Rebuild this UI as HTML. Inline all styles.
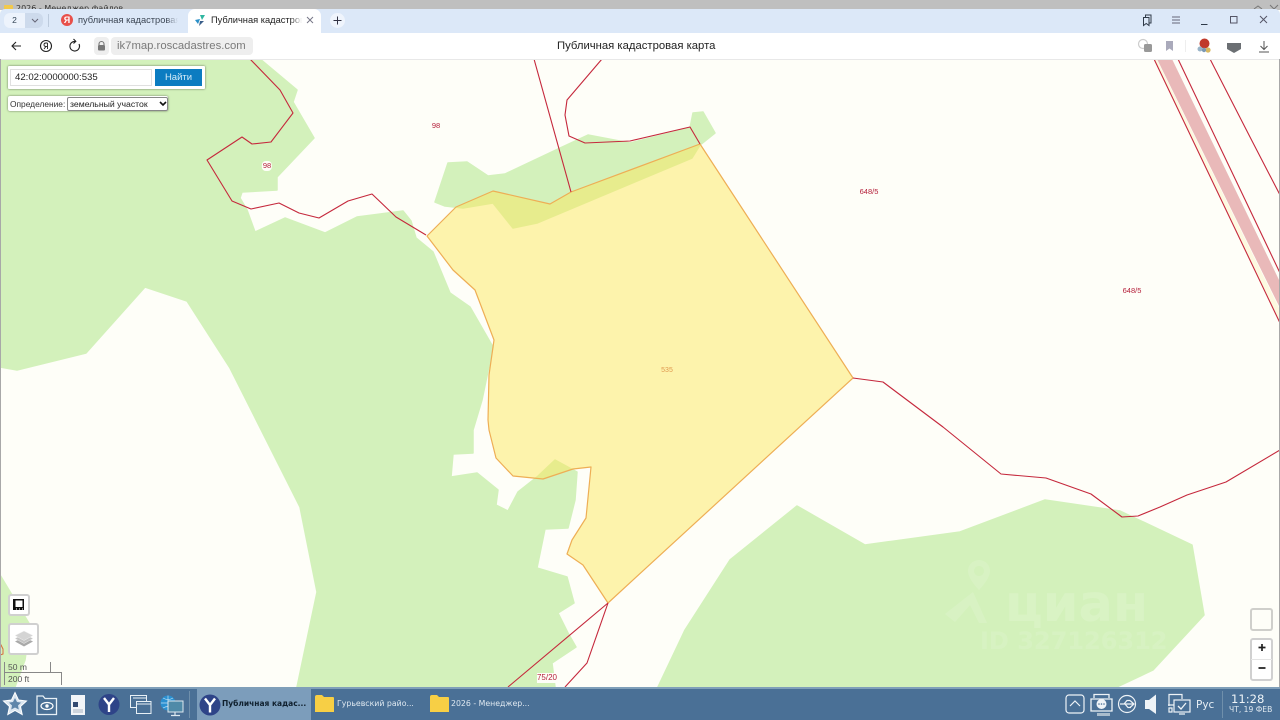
<!DOCTYPE html>
<html lang="ru"><head><meta charset="utf-8"><title>Публичная кадастровая карта</title>
<style>
html,body{margin:0;padding:0;width:1280px;height:720px;overflow:hidden;background:#fefef8;font-family:"Liberation Sans","Noto Sans CJK SC",sans-serif}
#w{position:absolute;left:0;top:0;width:1280px;height:720px;overflow:hidden;filter:blur(.3px)}
.a{position:absolute;white-space:nowrap}
svg{position:absolute;overflow:visible}
.lbl{position:absolute;font-size:7.5px;line-height:10px;color:#b5213c;transform:translateX(-50%)}
.dj{font-family:"DejaVu Sans",sans-serif}
.ctl{position:absolute;background:#fff;border:2px solid rgba(120,120,120,.35);border-radius:3px;box-sizing:border-box}
</style></head><body><div id="w">

<svg style="left:0;top:0" width="1280" height="720" viewBox="0 0 1280 720">
<rect width="1280" height="720" fill="#fefef8"/>
<g fill="#d3f1bb" stroke="#d3f1bb" stroke-width="1.5" stroke-linejoin="round">
<polygon points="0,59 260,59 297,90 293,102 314,138 277,177 277,190 242,192 240,198 247,210 255,232 285,218 325,233 357,217 403,211 411,221 416,238 433,252 450,293 470,307 493,347 482,400 473,430 473,453 453,454 451,477 477,473 498,490 496,505 508,511 518,492 537,477 555,460 577,472 575,500 568,528 545,529 537,568 567,577 574,603 558,613 568,633 576,647 552,663 555,687 297,687 317,592 300,507 230,368 187,301 145,287 86,353 17,370 0,367"/>
<polygon points="435,202 448,163 467,162 488,176 505,174 560,148 588,135 630,143 690,128 693,113 703,112 715,133 700,145 692,158 537,223 513,228 493,203 463,208 445,206"/>
<polygon points="658,687 685,630 730,560 797,506 865,545 960,532 1045,500 1120,511 1192,545 1204,615 1153,670 1117,687"/>
<polygon points="0,575 30,625 25,660 15,687 0,687"/>
</g>
<polygon points="1157,59 1172,59 1280,282 1280,308" fill="#e9b9b9"/>
<polygon points="1154,60 1157,60 1280,310 1280,322" fill="#fbf3c8" opacity=".5"/>
<polygon points="427,236 456,207 493,191 550,204 571,192 700,144 853,378 608,603 583,565 567,554 572,540 586,518 591,467 573,469 543,479 513,476 496,458 489,430 488,420 489,375 494,340 475,290 453,270" fill="#fce85f" fill-opacity=".5" stroke="#eeae55" stroke-width="1.2" stroke-linejoin="round"/>
<g fill="none" stroke="#c5283c" stroke-width="1.1" stroke-linejoin="round">
<polyline points="250,59 280,90 293,113 271,142 252,144 242,137 207,160 232,201 251,209 279,203 299,213 319,218 348,201 372,194 396,217 426,235"/>
<polyline points="534,59 571,192"/>
<polyline points="602,59 567,100 565,115 569,136 585,143 630,141 690,127 700,144"/>
<polyline points="853,378 883,382 943,427 1001,474 1046,478 1091,494 1122,517 1138,516 1160,507 1187,495 1226,482 1280,450"/>
<polyline points="608,603 508,687"/>
<polyline points="608,603 587,663 565,687"/>
<polyline points="1154,59 1280,323"/>
<polyline points="1178,59 1280,273"/>
<polyline points="1210,59 1250,137 1280,195"/>
</g>
<path d="M0,643 l3,6 l0,5 l-3,1" fill="none" stroke="#d8693c" stroke-width="1"/>
<g fill="#fff" fill-opacity=".13">
<path d="M979,560 a11,11 0 0 1 11,11 c0,8 -11,19 -11,19 c0,0 -11,-11 -11,-19 a11,11 0 0 1 11,-11 Z M979,566 a5,5 0 1 0 .01,0 Z" fill-rule="evenodd"/>
<path d="M945,614 L973,592 L987,623 L979,623 L970,605 L955,622 Z"/>
</g>
</svg>

<div class="a dj" style="left:1005px;top:575px;font-size:51px;line-height:60px;font-weight:bold;color:#fff;opacity:.14">циан</div>
<div class="a dj" style="left:980px;top:627px;font-size:24px;line-height:28px;font-weight:bold;color:#fff;opacity:.11">ID 327126312</div>

<div class="lbl" style="left:436px;top:121px">98</div>
<div class="lbl" style="left:267px;top:161px;background:#fefef8;border-radius:4px;padding:0 1px">98</div>
<div class="lbl" style="left:869px;top:187px">648/5</div>
<div class="lbl" style="left:1132px;top:286px">648/5</div>
<div class="lbl" style="left:667px;top:366px;color:#e09a50;font-size:7px">535</div>
<div class="lbl" style="left:547px;top:673px;background:#fefef8;font-size:8px">75/20</div>

<!-- Window chrome -->
<div class="a" style="left:0;top:0;width:1280px;height:10px;background:#bfbfbf;overflow:hidden">
 <div class="a dj" style="left:16px;top:4px;font-size:8px;line-height:10px;color:#333">2026 - Менеджер файлов</div>
 <div class="a" style="left:4px;top:5px;width:9px;height:7px;background:#f2c94c;border-radius:1px"></div>
 <svg style="left:1254px;top:4px" width="26" height="6"><path d="M0,5 L4,2 L8,5 M16,1 L20,5 L24,1" fill="none" stroke="#777" stroke-width="1"/></svg>
</div>
<div class="a" style="left:0;top:9px;width:1280px;height:24px;background:#dce8f8;border-radius:5px 5px 0 0"></div>
<div class="a" style="left:4px;top:13px;width:21px;height:15px;background:#edf3fc;border-radius:6px 0 0 6px"></div>
<div class="a" style="left:25px;top:13px;width:18px;height:15px;background:#cddaec;border-radius:0 6px 6px 0"></div>
<div class="a" style="left:4px;top:13px;width:21px;height:15px;line-height:15px;text-align:center;font-size:8.5px;color:#345">2</div>
<svg style="left:31px;top:18px" width="8" height="5"><path d="M1,1 L4,4 L7,1" fill="none" stroke="#667" stroke-width="1"/></svg>
<div class="a" style="left:48px;top:14px;width:1px;height:13px;background:#bccadc"></div>
<div class="a" style="left:61px;top:14px;width:12px;height:12px;border-radius:50%;background:#e8504a;color:#fff;font-size:9px;line-height:12px;text-align:center;font-weight:bold">Я</div>
<div class="a" style="left:78px;top:14px;width:100px;height:13px;font-size:9.3px;line-height:13px;color:#3c4654;overflow:hidden;-webkit-mask-image:linear-gradient(90deg,#000 88%,transparent)">публичная кадастровая</div>
<div class="a" style="left:188px;top:9px;width:133px;height:24px;background:#fff;border-radius:7px 7px 0 0"></div>
<svg style="left:195px;top:15px" width="11" height="11" viewBox="0 0 11 11"><path d="M5,0 L10,0 L7,5 Z" fill="#2fb6a0"/><path d="M0,5 L5,4 L3,9 Z" fill="#2a8fc8"/><path d="M5,6 L9,6 L4,11 Z" fill="#3a5f8a"/></svg>
<div class="a" style="left:211px;top:14px;width:91px;height:13px;font-size:9.3px;line-height:13px;color:#222;overflow:hidden;-webkit-mask-image:linear-gradient(90deg,#000 88%,transparent)">Публичная кадастровая карта</div>
<svg style="left:306px;top:16px" width="8" height="8"><path d="M1,1 L7,7 M7,1 L1,7" stroke="#778" stroke-width="1"/></svg>
<div class="a" style="left:330px;top:13px;width:15px;height:15px;border-radius:50%;background:#eff4fc"></div>
<svg style="left:333px;top:16px" width="9" height="9"><path d="M4.5,0.5 V8.5 M0.5,4.5 H8.5" stroke="#334" stroke-width="1"/></svg>

<svg style="left:1140px;top:14px" width="130" height="13" viewBox="0 0 130 13" fill="none" stroke="#2f3a48" stroke-width="1">
<path d="M3.5,3.5 H9 V11.5 L6.2,9.5 L3.5,11.5 Z M5.5,3 V1 H11 V9 H9.5"/>
<path d="M32,3 H40 M32,6 H40 M32,9 H40" stroke="#667"/>
<path d="M61,10.5 H67.5"/>
<rect x="90.5" y="2.5" width="6.5" height="6.5" stroke="#556"/>
<path d="M120,2 L127,9 M127,2 L120,9" stroke="#556"/>
</svg>

<div class="a" style="left:0;top:33px;width:1280px;height:26px;background:#fff;border-bottom:1px solid #e8e8e8;box-sizing:content-box"></div>
<svg style="left:10px;top:38px" width="72" height="16" viewBox="0 0 72 16" fill="none" stroke="#222" stroke-width="1.1">
<path d="M11,8 H2 M6,4 L2,8 L6,12"/>
<circle cx="36" cy="8" r="5.5"/>
<path d="M37.5,5 H36 Q34,5 34,6.7 Q34,8.4 36,8.4 H37.5 M37.5,5 V11 M36,8.4 L34,11" stroke-width=".9"/>
<path d="M69,6 A4.8,4.8 0 1 1 65,3.4 M63.5,1 L65.8,3.4 L63.5,5.5"/>
</svg>
<div class="a" style="left:94px;top:37px;width:15px;height:18px;background:#eee;border-radius:4px"></div>
<svg style="left:97px;top:41px" width="9" height="10"><path d="M2,4 V3 A2.5,2.5 0 0 1 7,3 V4" fill="none" stroke="#777" stroke-width="1.1"/><rect x="1" y="4" width="7" height="5.5" rx="1" fill="#777"/></svg>
<div class="a" style="left:111px;top:37px;width:142px;height:18px;background:#eee;border-radius:4px"></div>
<div class="a" style="left:117px;top:37px;font-size:11.3px;line-height:18px;color:#7a7a7a">ik7map.roscadastres.com</div>
<div class="a" style="left:557px;top:39px;font-size:11.3px;line-height:14px;color:#222">Публичная кадастровая карта</div>

<svg style="left:1136px;top:37px" width="136" height="18" viewBox="0 0 136 18">
<circle cx="7" cy="7" r="4.5" fill="none" stroke="#ccc" stroke-width="1.2"/>
<rect x="8" y="7" width="8" height="8" rx="1.5" fill="#999"/>
<path d="M30,4 H37 V14 L33.5,11.5 L30,14 Z" fill="#aab"/>
<line x1="49.5" y1="3" x2="49.5" y2="15" stroke="#eee"/>
<circle cx="68.5" cy="6.5" r="5" fill="#c0392b"/>
<circle cx="64" cy="12" r="2.5" fill="#9ab4c8"/><circle cx="72" cy="13" r="2.6" fill="#d8b860"/><circle cx="68" cy="13" r="2.2" fill="#7d99b3"/>
<path d="M91,6 H105 V12 L98,16 L91,12 Z" fill="#6b6f73"/>
<path d="M128,4 V12 M124.5,9 L128,12.5 L131.5,9 M123,15 H133" fill="none" stroke="#555" stroke-width="1"/>
</svg>

<!-- left / right window edge -->
<div class="a" style="left:0;top:59px;width:1px;height:628px;background:#a8a8a8"></div>
<div class="a" style="left:1279px;top:59px;width:1px;height:628px;background:#a8a8a8"></div>

<!-- search -->
<div class="a" style="left:8px;top:66px;width:197px;height:23px;background:#fff;box-shadow:0 0 2px rgba(0,0,0,.55);border-radius:1px"></div>
<div class="a" style="left:10px;top:69px;width:142px;height:17px;border:1px solid #e0e0e0;box-sizing:border-box"></div>
<div class="a" style="left:15px;top:70px;font-size:9.6px;line-height:15px;color:#222">42:02:0000000:535</div>
<div class="a" style="left:155px;top:69px;width:47px;height:17px;background:#0b7cc1;color:#d6ecf8;font-size:9.5px;line-height:17px;text-align:center">Найти</div>
<div class="a" style="left:8px;top:96px;width:160px;height:15px;background:#fff;box-shadow:0 0 2px rgba(0,0,0,.5);border-radius:2px"></div>
<div class="a" style="left:10px;top:97px;font-size:8.4px;line-height:14px;color:#333">Определение:</div>
<div class="a" style="left:67px;top:97px;width:101px;height:14px;border:1px solid #888;border-radius:2px;box-sizing:border-box;background:#fff"></div>
<div class="a" style="left:70px;top:97px;font-size:8.7px;line-height:14px;color:#222">земельный участок</div>
<svg style="left:159px;top:101px" width="8" height="6"><path d="M1,1 L4,4 L7,1" fill="none" stroke="#111" stroke-width="1.6"/></svg>

<!-- map controls -->
<div class="ctl" style="left:8px;top:594px;width:22px;height:22px"></div>
<svg style="left:13px;top:599px" width="11" height="11"><path d="M0,0 H11 V11 H0 Z" fill="#111"/><rect x="2.5" y="1.5" width="7" height="6.5" fill="#fff"/><path d="M3,10 h1 M6,10 h1 M9,10 h1" stroke="#fff"/></svg>
<div class="ctl" style="left:8px;top:623px;width:31px;height:32px"></div>
<svg style="left:14px;top:630px" width="20" height="19" viewBox="0 0 20 19">
<path d="M1,11.5 L10,16.5 L19,11.5 L10,7 Z" fill="#aaa"/><path d="M1,8.5 L10,13.5 L19,8.5 L10,4 Z" fill="#c4c4c4" stroke="#eee" stroke-width=".5"/><path d="M1,5.5 L10,10.5 L19,5.5 L10,1 Z" fill="#d4d4d4" stroke="#f2f2f2" stroke-width=".5"/></svg>

<div class="a" style="left:4px;top:662px;width:47px;height:10px;border-left:1px solid #888;border-right:1px solid #888;box-sizing:border-box;font-size:8.5px;line-height:11px;color:#555;padding-left:3px">50 m</div>
<div class="a" style="left:4px;top:672px;width:58px;height:13px;border-top:1px solid #888;border-left:1px solid #888;border-right:1px solid #888;box-sizing:border-box;font-size:8.5px;line-height:13px;color:#555;padding-left:3px">200 ft</div>

<div class="ctl" style="left:1250px;top:608px;width:23px;height:23px;background:#fefef8"></div>
<div class="ctl" style="left:1250px;top:638px;width:23px;height:43px"></div>
<div class="a" style="left:1251px;top:659px;width:21px;height:1px;background:#e4e4e4"></div>
<svg style="left:1257px;top:643px" width="10" height="30"><path d="M5,1 V8 M1.5,4.5 H8.5 M1.5,25 H8.5" stroke="#222" stroke-width="1.7"/></svg>

<!-- taskbar -->
<div class="a" style="left:0;top:687px;width:1280px;height:33px;background:#4a7096"></div>
<div class="a" style="left:0;top:687px;width:1280px;height:2px;background:#7f9fb9"></div>
<div class="a" style="left:197px;top:689px;width:114px;height:31px;background:#7c9dbb"></div>
<div class="a" style="left:189px;top:691px;width:1px;height:27px;background:#6f8fab"></div>

<svg style="left:0;top:689px" width="190" height="31" viewBox="0 0 190 31">
<path d="M15,3.5 L18.5,11 L26.5,12 L20.5,17.5 L22.2,25.5 L15,21.5 L7.8,25.5 L9.5,17.5 L3.5,12 L11.5,11 Z" fill="#dbe6f0" stroke="#fff" stroke-width="1"/>
<path d="M15,9 L17,13 L21,13.6 L18,16.5 L18.8,20.5 L15,18.5 L11.2,20.5 L12,16.5 L9,13.6 L13,13 Z" fill="#5f86aa"/>
<path d="M37,7 V25.5 H56.5 V9.5 H45 L43,7 Z" fill="#4a7096" stroke="#e8f0f6" stroke-width="1.3"/>
<ellipse cx="47" cy="17" rx="6" ry="3.5" fill="none" stroke="#fff" stroke-width="1.2"/><circle cx="47" cy="17" r="1.7" fill="#fff"/>
<path d="M71,6 H85 V26 H71 Z" fill="#f2f5f8"/><rect x="73" y="13" width="5" height="5" fill="#324a70"/><path d="M73,21 H83 M73,23 H83" stroke="#a8b4c0"/>
<circle cx="109" cy="15.5" r="10.5" fill="#2e4488"/><path d="M104,9 L109,15.5 L114,9 M109,15.5 V23" fill="none" stroke="#fff" stroke-width="2.4"/>
<rect x="130.5" y="6.5" width="16" height="12" fill="#4a7096" stroke="#e8f0f6"/>
<rect x="136.5" y="12.5" width="14.5" height="12" fill="#4a7096" stroke="#e8f0f6"/>
<path d="M137,15 H151 M133,9 H146" stroke="#e8f0f6" stroke-width="1"/>
<circle cx="168" cy="14" r="7.5" fill="#2a8fd0"/><path d="M161,14 H175 M168,6.5 V21.5 M163,9 Q168,12 173,9 M163,19 Q168,16 173,19" stroke="#bfe0f4" stroke-width=".7" fill="none"/>
<rect x="168" y="12" width="15" height="11" fill="#4f8aa8" stroke="#dde8ef"/><path d="M175,23 V26 M171,26.5 H180" stroke="#dde8ef" stroke-width="1.2"/>
</svg>
<svg style="left:199px;top:689px" width="22" height="31" viewBox="0 0 22 31"><circle cx="11" cy="16" r="10.5" fill="#2e4488"/><path d="M6,9.5 L11,16 L16,9.5 M11,16 V23.5" fill="none" stroke="#fff" stroke-width="2.4"/></svg>
<div class="a dj" style="left:222px;top:698px;font-size:7.5px;line-height:12px;font-weight:bold;color:#10202e">Публичная кадас...</div>

<svg style="left:315px;top:694px" width="20" height="20"><path d="M0,3 Q0,1 2,1 H7 L9,3 H18 Q19,3 19,4 V18 H0 Z" fill="#f7cf45"/></svg>
<div class="a dj" style="left:337px;top:698px;font-size:7.8px;line-height:12px;color:#dfe8f0">Гурьевский райо...</div>
<svg style="left:430px;top:694px" width="20" height="20"><path d="M0,3 Q0,1 2,1 H7 L9,3 H18 Q19,3 19,4 V18 H0 Z" fill="#f7cf45"/></svg>
<div class="a dj" style="left:451px;top:698px;font-size:7.8px;line-height:12px;color:#dfe8f0">2026 - Менеджер...</div>

<svg style="left:1064px;top:689px" width="135" height="31" viewBox="0 0 135 31" fill="none" stroke="#eef3f7" stroke-width="1.2">
<rect x="2" y="6" width="18" height="18" rx="3"/>
<path d="M6,17 L11,12 L16,17"/>
<path d="M30,9 V5.5 H45 V9 M27,10 H48 V22 H27 Z" stroke-width="1.3"/>
<circle cx="37.5" cy="15" r="5" fill="#eef3f7" stroke="none"/><path d="M33,24 H46 V27 H33 Z" fill="#a9bccc" stroke="none"/>
<circle cx="37.5" cy="15" r=".8" fill="#4a7096" stroke="none"/><circle cx="35" cy="15" r=".8" fill="#4a7096" stroke="none"/><circle cx="40" cy="15" r=".8" fill="#4a7096" stroke="none"/>
<circle cx="63" cy="15" r="8.5"/>
<path d="M56,15 H70 M66,11.5 L70,15 L66,18.5 M60,15 L63,11.5 H66 M61,15 L64,18.5 H67"/>
<path d="M81,11 H85 L92,5.5 V25 L85,20 H81 Z" fill="#eef3f7" stroke="none"/>
<path d="M105,17 V5.5 H118 V10 M104,16 H110"/>
<rect x="110" y="11" width="16" height="12"/>
<path d="M114,17 L117,20 L122,14" stroke-width="1.3"/>
<path d="M115,25 H121 M105,19 H108 V23 H105 Z"/>
</svg>
<div class="a dj" style="left:1196px;top:698px;font-size:10.5px;line-height:14px;color:#e8eff5">Рус</div>
<div class="a" style="left:1222px;top:691px;width:1px;height:27px;background:#6f8fab"></div>
<div class="a dj" style="left:1231px;top:692px;font-size:11.6px;line-height:15px;color:#eef3f7">11:28</div>
<div class="a dj" style="left:1229px;top:705px;font-size:7.6px;line-height:10px;color:#dfe8f0">ЧТ, 19 ФЕВ</div>
</div></body></html>
